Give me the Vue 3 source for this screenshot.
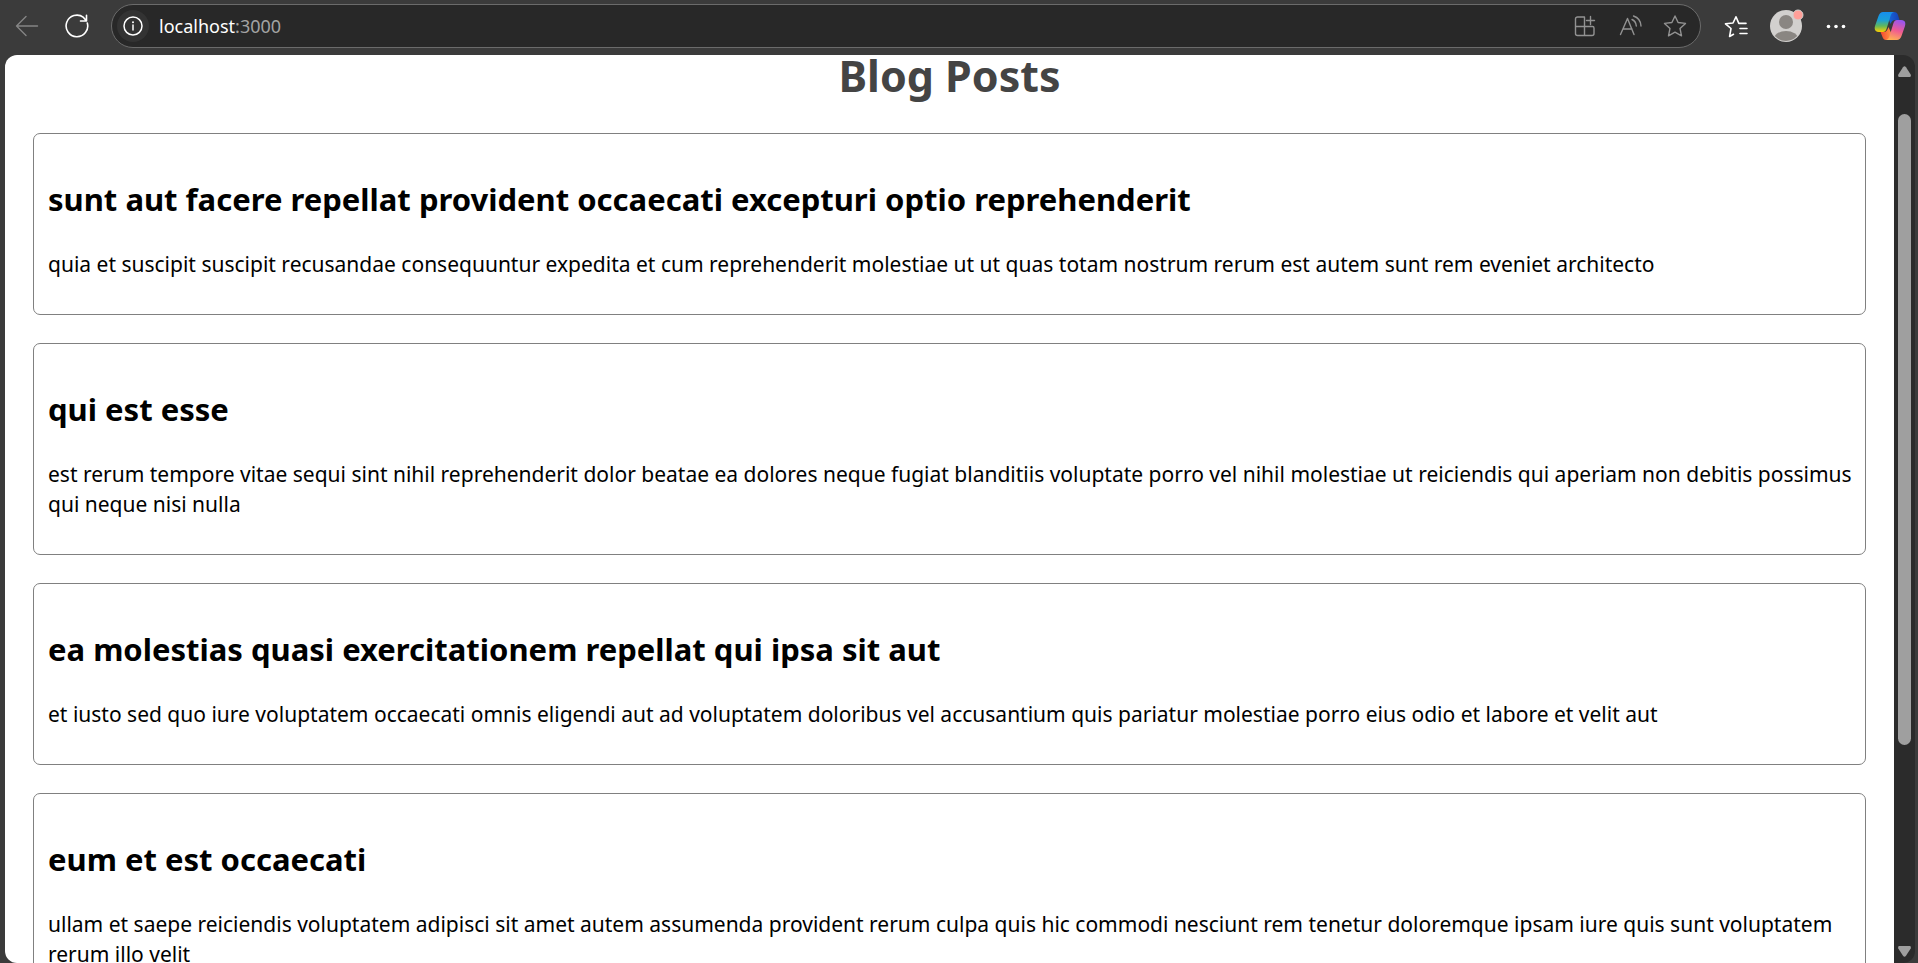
<script setup>
const posts = [
  {
    id: 1,
    title: 'sunt aut facere repellat provident occaecati excepturi optio reprehenderit',
    body: 'quia et suscipit suscipit recusandae consequuntur expedita et cum reprehenderit molestiae ut ut quas totam nostrum rerum est autem sunt rem eveniet architecto',
  },
  {
    id: 2,
    title: 'qui est esse',
    body: 'est rerum tempore vitae sequi sint nihil reprehenderit dolor beatae ea dolores neque fugiat blanditiis voluptate porro vel nihil molestiae ut reiciendis qui aperiam non debitis possimus qui neque nisi nulla',
  },
  {
    id: 3,
    title: 'ea molestias quasi exercitationem repellat qui ipsa sit aut',
    body: 'et iusto sed quo iure voluptatem occaecati omnis eligendi aut ad voluptatem doloribus vel accusantium quis pariatur molestiae porro eius odio et labore et velit aut',
  },
  {
    id: 4,
    title: 'eum et est occaecati',
    body: 'ullam et saepe reiciendis voluptatem adipisci sit amet autem assumenda provident rerum culpa quis hic commodi nesciunt rem tenetur doloremque ipsam iure quis sunt voluptatem rerum illo velit',
  },
]
</script>

<template>
  <div class="browser">
    <header class="toolbar">
      <button class="tool back" type="button" aria-label="Back">
        <svg width="24" height="24" viewBox="0 0 24 24" fill="none" stroke="#858585" stroke-width="1.4" stroke-linecap="round" stroke-linejoin="round">
          <path d="M22.5 12H1.5M11 2.500L1.500 12L11 21.500" />
        </svg>
      </button>
      <button class="tool reload" type="button" aria-label="Reload">
        <svg width="24" height="24" viewBox="0 0 24 24" fill="none" stroke="#fff" stroke-width="1.6" stroke-linecap="round" stroke-linejoin="round">
          <path d="M22.300 9A10.800 10.800 0 1 1 18.500 3.400L21.500 7M21.500 1.200V7H15.500" />
        </svg>
      </button>
      <div class="address">
        <button class="info" type="button" aria-label="Site information">
          <svg width="22" height="22" viewBox="0 0 22 22" fill="none" stroke="#fff" stroke-width="1.500">
            <circle cx="11" cy="11" r="9" />
            <path d="M11 10v5" stroke-linecap="round" />
            <circle cx="11" cy="7.300" r="1" fill="#fff" stroke="none" />
          </svg>
        </button>
        <a class="url" href="#"><span class="host">localhost</span>:3000</a>
        <div class="actions">
          <button class="tool" type="button" aria-label="Install app">
            <svg width="24" height="24" viewBox="0 0 24 24" fill="none" stroke="#929292" stroke-width="1.400" stroke-linecap="round" stroke-linejoin="round">
              <path d="M11.500 3H4.500a2 2 0 0 0-2 2v14.500a2 2 0 0 0 2 2H19a2 2 0 0 0 2-2V14a1.500 1.500 0 0 0-1.500-1.500h-17M11.500 3v18.500M17.500 2.500v8M13.500 6.500h8" />
            </svg>
          </button>
          <button class="tool" type="button" aria-label="Read aloud">
            <svg width="24" height="24" viewBox="0 0 24 24" fill="none" stroke="#929292" stroke-width="1.400" stroke-linecap="round" stroke-linejoin="round">
              <path d="M2.500 20.500L9.500 4.500L16 20.500M5 15H14M14 5.500C16.500 6.500 18 8.700 18.300 12M15.500 2C20 3.500 22.800 7 23 12" />
            </svg>
          </button>
          <button class="tool" type="button" aria-label="Add to favorites">
            <svg width="24" height="24" viewBox="0 0 24 24" fill="none" stroke="#929292" stroke-width="1.400" stroke-linejoin="round">
              <path d="M12 2L15.100 8.500L22.500 9.400L17 14.400L18.500 21.800L12 18.200L5.500 21.800L7 14.400L1.500 9.400L8.900 8.500Z" />
            </svg>
          </button>
        </div>
      </div>
      <div class="side">
        <button class="tool" type="button" aria-label="Favorites">
          <svg width="24" height="24" viewBox="0 0 24 24" fill="none" stroke="#fff" stroke-width="1.600" stroke-linecap="round" stroke-linejoin="round">
            <path d="M22 9.400H14.800L12 2.800L9 9L1.500 9.800L7 14.500L5.600 22.500L9.500 20.300M16 14.500h7M16 19.500h7" />
          </svg>
        </button>
        <button class="tool profile" type="button" aria-label="Profile">
          <svg width="36" height="36" viewBox="0 0 36 36">
            <defs><clipPath id="face"><circle cx="18" cy="18" r="15" /></clipPath></defs>
            <circle cx="18" cy="18" r="16" fill="#d2d0ce" />
            <g fill="#8a8682" clip-path="url(#face)">
              <circle cx="18" cy="14" r="7" />
              <ellipse cx="18" cy="31" rx="12" ry="8" />
            </g>
            <circle cx="30" cy="7" r="5" fill="#ff9f98" stroke="#d2d0ce" stroke-width="1" />
          </svg>
        </button>
        <button class="tool" type="button" aria-label="Settings and more">
          <svg width="24" height="24" viewBox="0 0 24 24" fill="#fff">
            <circle cx="4.500" cy="12.500" r="1.800" /><circle cx="12" cy="12.500" r="1.800" /><circle cx="19.500" cy="12.500" r="1.800" />
          </svg>
        </button>
        <button class="tool copilot" type="button" aria-label="Copilot">
          <svg width="32" height="30" viewBox="0 0 32 30">
            <defs>
              <linearGradient id="cool" x1="0" y1="0" x2="0" y2="1">
                <stop offset="0" stop-color="#168eed" /><stop offset=".4" stop-color="#1a9fd8" /><stop offset=".7" stop-color="#62b85b" /><stop offset="1" stop-color="#ffd000" />
              </linearGradient>
              <linearGradient id="warm" x1=".6" y1="0" x2=".3" y2="1">
                <stop offset="0" stop-color="#9a55ee" /><stop offset=".5" stop-color="#f05b92" /><stop offset="1" stop-color="#ffb152" />
              </linearGradient>
              <linearGradient id="navy"><stop offset="0" stop-color="#1768dc" /><stop offset="1" stop-color="#1740b4" /></linearGradient>
              <linearGradient id="coral"><stop offset="0" stop-color="#f3462f" /><stop offset="1" stop-color="#ff9b45" /></linearGradient>
            </defs>
            <path d="M17 1H20Q23 1 24 4L25.500 9H21Q18 9 16.500 13L14 6Z" fill="url(#navy)" />
            <path d="M6.500 21H10Q13 21 14.500 16L18 24L15 29H12Q9.500 29 8.500 26Z" fill="url(#coral)" />
            <path d="M9 1H20Q17.500 1.500 16.500 5L12.500 18Q11.500 21 9 21H5Q-.5 21 1 15L4.500 5Q6 1 9 1Z" fill="url(#cool)" />
            <path d="M23 9H27Q32.500 9 31 15L27.500 25Q26 29 23 29H12Q14.500 28.500 15.500 25L19.500 12Q20.500 9 23 9Z" fill="url(#warm)" />
          </svg>
        </button>
      </div>
    </header>

    <div class="viewport">
      <main class="page">
        <h1>Blog Posts</h1>
        <article v-for="post in posts" :key="post.id" class="post">
          <h2>{{ post.title }}</h2>
          <p>{{ post.body }}</p>
        </article>
      </main>
      <div class="scrollbar" aria-hidden="true">
        <svg width="13" height="11" viewBox="0 0 13 11" fill="#9f9f9f"><path d="M5 1.200Q6.500-.8 8 1.200L12.700 8.500Q13.400 11 11.500 11H1.500Q-.4 11 .3 8.500Z" /></svg>
        <div class="track"><div class="thumb"></div></div>
        <svg width="13" height="11" viewBox="0 0 13 11" fill="#9f9f9f"><path d="M5 9.800Q6.500 11.800 8 9.800L12.700 2.500Q13.400 0 11.500 0H1.500Q-.4 0 .3 2.500Z" /></svg>
      </div>
    </div>
  </div>
</template>

<style>
body {
  margin: 0;
  background: #3b3b3b;
}
</style>

<style scoped>
.browser {
  display: flex;
  flex-direction: column;
  height: 100vh;
  overflow: hidden;
  background: #3b3b3b;
  font-family: "Noto Sans", "Open Sans", sans-serif;
}
.toolbar {
  display: flex;
  flex: none;
  align-items: center;
  box-sizing: border-box;
  height: 55px;
  padding: 0 12px 3px 15px;
}
button {
  display: flex;
  align-items: center;
  justify-content: center;
  flex: none;
  padding: 0;
  border: 0;
  background: none;
}
svg {
  display: block;
}
.reload {
  margin: 0 22px 0 26px;
}
.address {
  display: flex;
  flex: 1;
  align-items: center;
  box-sizing: border-box;
  height: 44px;
  padding: 0 13px 0 5px;
  border: 1px solid #6b6b6b;
  border-radius: 22px;
  background: #282828;
}
.info {
  width: 32px;
  height: 32px;
  border-radius: 16px;
  background: #333;
}
.url {
  flex: 1;
  margin-left: 10px;
  color: #a3a3a3;
  font-size: 18px;
  line-height: 26px;
  text-decoration: none;
}
.host {
  color: #fff;
}
.actions {
  display: flex;
  gap: 21px;
}
.side {
  display: flex;
  align-items: center;
  gap: 26px;
  margin-left: 23px;
}
.profile {
  margin: 0 -6px;
}
.viewport {
  display: flex;
  flex: 1;
  min-height: 0;
  margin: 0 3px 0 5px;
  overflow: hidden;
  border-radius: 12px;
  background: #2b2b2b;
}
.page {
  flex: 1;
  min-width: 0;
  overflow: hidden;
  padding: 0 28px;
  background: #fff;
  color: #000;
}
h1 {
  margin: 0 0 36px;
  color: #444;
  font-size: 43px;
  line-height: 42px;
  text-align: center;
}
.post {
  margin-bottom: 28px;
  padding: 14px 8px 14px 14px;
  border: 1px solid #808080;
  border-radius: 7px;
}
h2 {
  margin: 29px 0 27px;
  font-size: 31px;
  line-height: 45px;
}
p {
  margin: 0 0 21px;
  font-size: 21px;
  line-height: 30px;
}
.scrollbar {
  display: flex;
  flex: none;
  flex-direction: column;
  align-items: center;
  box-sizing: border-box;
  width: 21px;
  padding: 11px 0 6px;
}
.track {
  flex: 1;
  width: 13px;
  padding: 37px 0 12px;
}
.thumb {
  height: 77%;
  border-radius: 7px;
  background: #9f9f9f;
}
</style>
